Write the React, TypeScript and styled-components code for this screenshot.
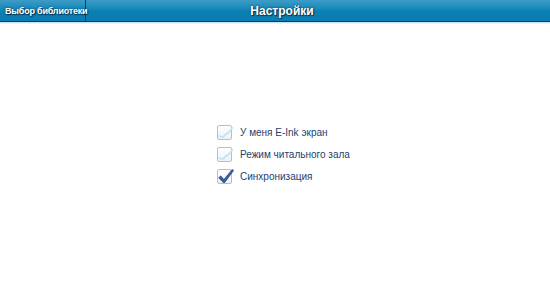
import styled, { createGlobalStyle } from "styled-components";

const GlobalStyle = createGlobalStyle`
  html, body {
    margin: 0;
    padding: 0;
    background: #ffffff;
  }
`;

const Page = styled.div`
  width: 550px;
  height: 304px;
  display: flex;
  flex-direction: column;
  background: #ffffff;
  font-family: "Liberation Sans", Arial, sans-serif;
`;

const Header = styled.div`
  display: flex;
  height: 21px;
  background: linear-gradient(#3d9cc6 0%, #1587b8 45%, #0a7fb1 55%, #0a7eb0 100%);
  border-bottom: 1px solid #0a3c58;
  box-shadow: 0 1px 0 #c8e4f2, 0 2px 0 #e8f4fa;
`;

const BackButton = styled.div`
  width: 86px;
  display: flex;
  align-items: center;
  padding-left: 5px;
  box-sizing: border-box;
  border-right: 1px solid #0b3f5d;
  color: #ffffff;
  font-size: 9px;
  font-weight: bold;
  text-shadow: 0 0 2px #0a3450, 1px 1px 1px #0a3450;
  white-space: nowrap;
  letter-spacing: -0.2px;
`;

const Title = styled.div`
  flex: 1;
  display: flex;
  align-items: center;
  justify-content: center;
  padding-right: 72px;
  color: #ffffff;
  font-size: 12px;
  font-weight: bold;
  text-shadow: 0 0 2px #0a3450, 1px 1px 1px #0a3450;
`;

const Body = styled.div`
  flex: 1;
  display: flex;
  padding-top: 103px;
  padding-left: 217px;
`;

const Options = styled.div`
  display: flex;
  flex-direction: column;
  gap: 7px;
`;

const Row = styled.div`
  display: flex;
  align-items: center;
  gap: 8px;
  height: 15px;
  color: #1d3f6e;
  font-size: 10px;
`;

const Box = styled.span`
  width: 13px;
  height: 13px;
  border: 1px solid #b8bec4;
  border-radius: 2px;
  background: linear-gradient(#ffffff, #eef1f3);
  position: relative;
  display: inline-block;
  flex-shrink: 0;
`;

const Mark = styled.svg`
  position: absolute;
  left: -1px;
  top: -3px;
`;

function Check({ on }: { on: boolean }) {
  return (
    <Box>
      <Mark width="17" height="17" viewBox="0 0 16 16">
        {on ? (
          <path d="M1.2 10 L3.5 8 L6.5 11.2 L14.3 1.8 L16 3.2 L7.3 15 L6 15 Z" fill="#35599a" />
        ) : (
          <path d="M1.5 12 L4 13 L6 13 L8 10.5 L10 9.8 L13 6.5 L14.8 4" fill="none" stroke="#bfe3f5" strokeWidth="1.6" strokeLinejoin="round" />
        )}
      </Mark>
    </Box>
  );
}

const items = [
  { label: "У меня E-Ink экран", on: false },
  { label: "Режим читального зала", on: false },
  { label: "Синхронизация", on: true },
];

export default function App() {
  return (
    <Page>
      <GlobalStyle />
      <Header>
        <BackButton>Выбор библиотеки</BackButton>
        <Title>Настройки</Title>
      </Header>
      <Body>
        <Options>
          {items.map((it) => (
            <Row key={it.label}>
              <Check on={it.on} />
              {it.label}
            </Row>
          ))}
        </Options>
      </Body>
    </Page>
  );
}
